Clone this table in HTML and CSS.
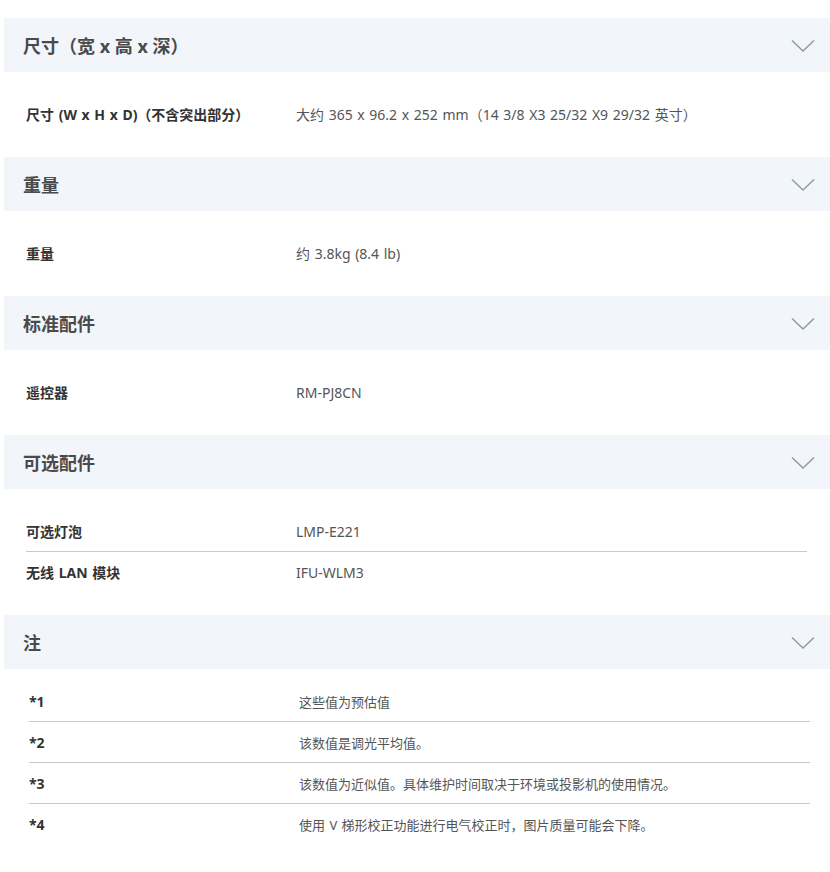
FILE: index.html
```html
<!DOCTYPE html>
<html lang="zh-CN">
<head>
    <meta charset="UTF-8">
    <meta name="viewport" content="width=device-width, initial-scale=1.0">
    <title>规格</title>
    <link rel="stylesheet" href="styles.css">
</head>
<body>

    <div class="spec-list">

        <!-- Dimensions -->
        <div class="spec-section">
            <div class="spec-header">
                <h3>尺寸（宽 x 高 x 深）</h3>
                <svg class="chevron" width="24" height="14" viewBox="0 0 24 14"><path d="M1 1.5 L12 12 L23 1.5"/></svg>
            </div>
            <div class="spec-body">
                <div class="spec-row">
                    <div class="spec-label">尺寸 (W x H x D)（不含突出部分）</div>
                    <div class="spec-value">大约 365 x 96.2 x 252 mm（14 3/8 X3 25/32 X9 29/32 英寸）</div>
                </div>
            </div>
        </div>

        <!-- Weight -->
        <div class="spec-section">
            <div class="spec-header">
                <h3>重量</h3>
                <svg class="chevron" width="24" height="14" viewBox="0 0 24 14"><path d="M1 1.5 L12 12 L23 1.5"/></svg>
            </div>
            <div class="spec-body">
                <div class="spec-row">
                    <div class="spec-label">重量</div>
                    <div class="spec-value">约 3.8kg (8.4 lb)</div>
                </div>
            </div>
        </div>

        <!-- Standard accessories -->
        <div class="spec-section">
            <div class="spec-header">
                <h3>标准配件</h3>
                <svg class="chevron" width="24" height="14" viewBox="0 0 24 14"><path d="M1 1.5 L12 12 L23 1.5"/></svg>
            </div>
            <div class="spec-body">
                <div class="spec-row">
                    <div class="spec-label">遥控器</div>
                    <div class="spec-value">RM-PJ8CN</div>
                </div>
            </div>
        </div>

        <!-- Optional accessories -->
        <div class="spec-section">
            <div class="spec-header">
                <h3>可选配件</h3>
                <svg class="chevron" width="24" height="14" viewBox="0 0 24 14"><path d="M1 1.5 L12 12 L23 1.5"/></svg>
            </div>
            <div class="spec-body">
                <div class="spec-row">
                    <div class="spec-label">可选灯泡</div>
                    <div class="spec-value">LMP-E221</div>
                </div>
                <div class="spec-row">
                    <div class="spec-label">无线 LAN 模块</div>
                    <div class="spec-value">IFU-WLM3</div>
                </div>
            </div>
        </div>

        <!-- Notes -->
        <div class="spec-section">
            <div class="spec-header">
                <h3>注</h3>
                <svg class="chevron" width="24" height="14" viewBox="0 0 24 14"><path d="M1 1.5 L12 12 L23 1.5"/></svg>
            </div>
            <div class="spec-body notes">
                <div class="spec-row">
                    <div class="spec-label">*1</div>
                    <div class="spec-value">这些值为预估值</div>
                </div>
                <div class="spec-row">
                    <div class="spec-label">*2</div>
                    <div class="spec-value">该数值是调光平均值。</div>
                </div>
                <div class="spec-row">
                    <div class="spec-label">*3</div>
                    <div class="spec-value">该数值为近似值。具体维护时间取决于环境或投影机的使用情况。</div>
                </div>
                <div class="spec-row">
                    <div class="spec-label">*4</div>
                    <div class="spec-value">使用 V 梯形校正功能进行电气校正时，图片质量可能会下降。</div>
                </div>
            </div>
        </div>

    </div>

</body>
</html>
```

FILE: styles.css
```css
body {
    font-family: "Noto Sans", "Noto Sans CJK SC", sans-serif;
    margin: 0;
    padding: 0;
    background-color: #fff;
    color: #333;
}

.spec-list {
    padding: 18px 0 0 4px;
}

.spec-header {
    height: 54px;
    display: flex;
    align-items: center;
    justify-content: space-between;
    padding: 0 15px 0 19px;
    background-color: #f2f6fb;
}

.spec-header h3 {
    margin: 0;
    font-size: 18px;
    font-weight: 700;
    color: #4a4a4a;
}

.chevron {
    margin-top: 2px;
}

.chevron path {
    fill: none;
    stroke: #8c9bab;
    stroke-width: 1.5;
}

.spec-body {
    padding: 22px 23px 23px 22px;
}

.spec-row {
    display: flex;
    align-items: center;
    height: 40px;
    word-spacing: 1px;
}

.spec-row + .spec-row {
    border-top: 1px solid #c8c8c8;
}

.spec-label {
    width: 270px;
    flex-shrink: 0;
    font-size: 14px;
    font-weight: 700;
    color: #333;
}

.spec-value {
    font-size: 14px;
    color: #555;
}

.notes {
    padding: 12px 20px 20px 25px;
}

.notes .spec-value {
    font-size: 13px;
}
```
